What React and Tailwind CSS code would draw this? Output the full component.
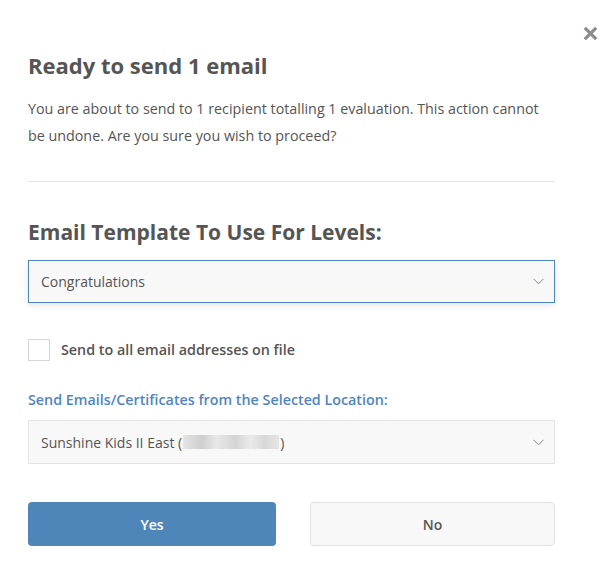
import React from "react";

function Chevron() {
  return (
    <svg width="11" height="7" viewBox="0 0 11 7" fill="none" className="shrink-0">
      <path d="M0.5 0.8 L5.5 5.8 L10.5 0.8" stroke="#8a8a8a" strokeWidth="1" />
    </svg>
  );
}

export default function App() {
  return (
    <div
      className="relative w-[612px] h-[579px] bg-white text-[#555555]"
      style={{ fontFamily: '"Open Sans", sans-serif' }}
    >
      <button className="absolute left-[581px] top-[24px] w-[18px] h-[18px] flex items-center justify-center">
        <svg width="15" height="15" viewBox="0 0 15 15">
          <path d="M1.8 1.8 L13.2 13.2 M13.2 1.8 L1.8 13.2" stroke="#8c8c8c" strokeWidth="3.2" strokeLinecap="butt" />
        </svg>
      </button>

      <div className="pl-[28px] pr-[57px] pt-[50px] flex flex-col">
        <h1 className="text-[22px] font-bold leading-[30px] text-[#555555]">Ready to send 1 email</h1>
        <p className="mt-[15px] text-[14.3px] leading-[27px] text-[#555555]">
          You are about to send to 1 recipient totalling 1 evaluation. This action cannot be undone. Are you sure you wish to proceed?
        </p>
        <div className="mt-[32px] h-px bg-[#e3e3e3]" />

        <h2 className="mt-[35px] text-[21px] font-bold leading-[30px] text-[#555555]">
          Email Template To Use For Levels:
        </h2>
        <div className="mt-[13px] h-[43px] border border-[#4f86c0] bg-[#f8f8f8] shadow-[0_2px_6px_rgba(0,0,0,0.12)] flex items-center justify-between pl-[12px] pr-[10px]">
          <span className="text-[14px] text-[#555555]">Congratulations</span>
          <Chevron />
        </div>

        <label className="mt-[36px] flex items-center gap-[11px]">
          <span className="w-[22px] h-[22px] border border-[#d6d6d6] bg-white" />
          <span className="text-[14.3px] font-semibold text-[#555555]">Send to all email addresses on file</span>
        </label>

        <div className="mt-[29px] text-[14.3px] font-semibold leading-[20px] text-[#4f86c0]">
          Send Emails/Certificates from the Selected Location:
        </div>
        <div className="mt-[10px] h-[44px] border border-[#e3e3e3] bg-[#f8f8f8] flex items-center justify-between pl-[12px] pr-[10px]">
          <span className="text-[14px] text-[#555555] flex items-center">
            Sunshine Kids II East (
            <span className="inline-block w-[96px] h-[14px] mx-[1px] bg-[linear-gradient(90deg,#e4e4e4,#cfcfcf_20%,#e8e8e8_35%,#d4d4d4_55%,#eaeaea_70%,#d8d8d8_85%,#e6e6e6)] blur-[0.6px]" />
            )
          </span>
          <Chevron />
        </div>

        <div className="mt-[38px] flex gap-[34px]">
          <button className="w-[248px] h-[44px] rounded-[4px] bg-[#4f86b9] text-white text-[14px] font-semibold">
            Yes
          </button>
          <button className="flex-1 h-[44px] rounded-[4px] bg-[#f8f8f8] border border-[#e3e3e3] text-[#555555] text-[14px] font-semibold">
            No
          </button>
        </div>
      </div>
    </div>
  );
}
